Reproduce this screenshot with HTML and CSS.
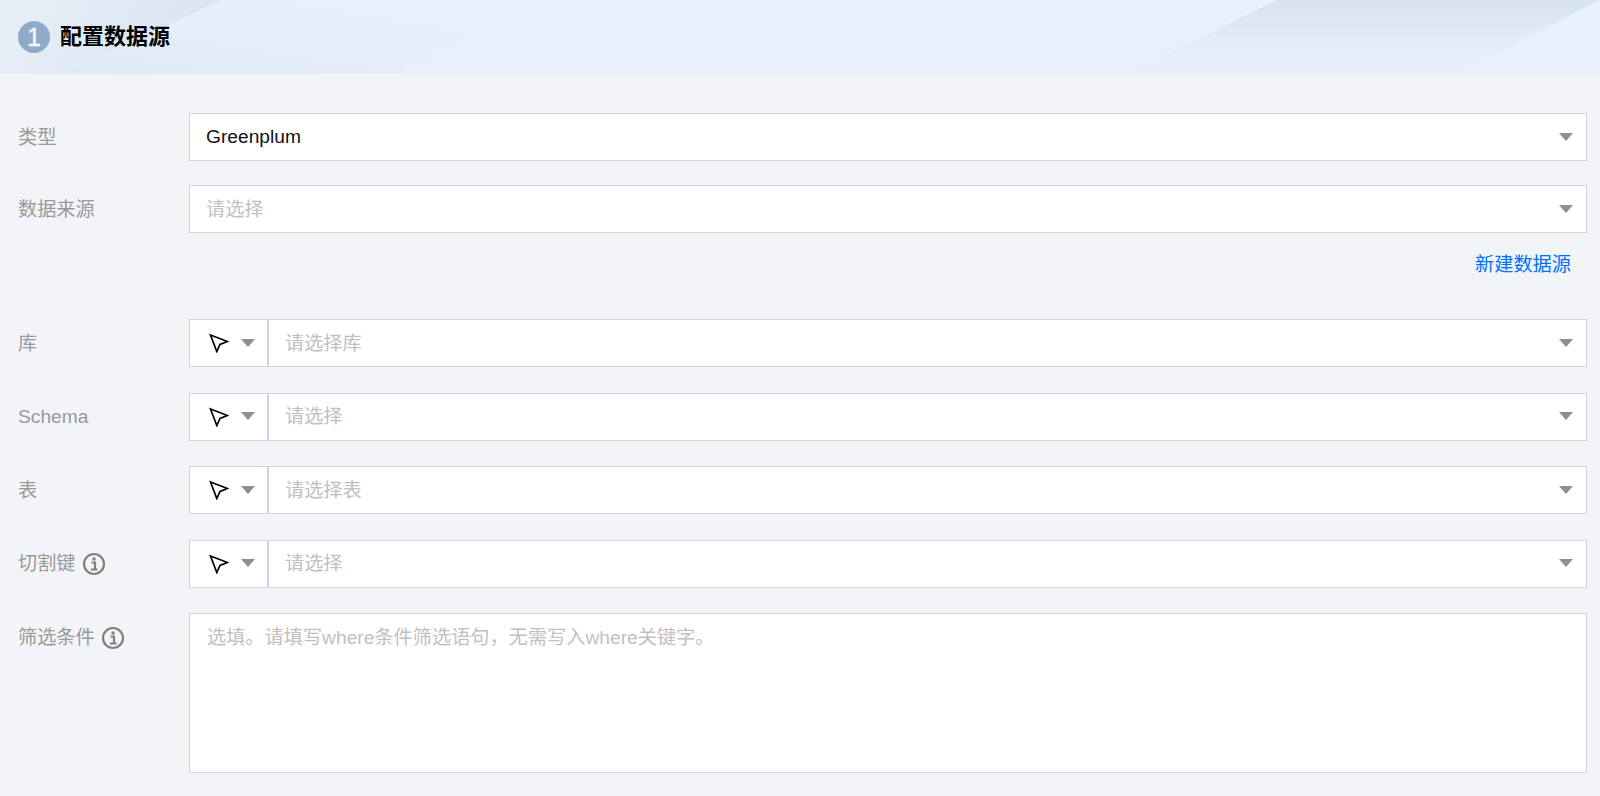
FILE: index.html
```html
<!DOCTYPE html>
<html lang="zh-CN">
<head>
    <meta charset="UTF-8">
    <meta name="viewport" content="width=device-width, initial-scale=1.0">
    <title>配置数据源</title>
    <link rel="stylesheet" href="styles.css">
</head>
<body>
    <div class="step-header">
        <svg class="step-bg" viewBox="0 0 1600 74" preserveAspectRatio="none" aria-hidden="true">
            <defs>
                <linearGradient id="bandLeft" x1="0" y1="0" x2="1" y2="0.2">
                    <stop offset="0" stop-color="#e9f0f8"/>
                    <stop offset="1" stop-color="#d8e4f1"/>
                </linearGradient>
                <linearGradient id="bandMid" x1="0" y1="1" x2="1" y2="0">
                    <stop offset="0" stop-color="#dfe9f5"/>
                    <stop offset="0.75" stop-color="#e8f1fb"/>
                </linearGradient>
                <linearGradient id="bandRight" x1="0" y1="0" x2="0" y2="1">
                    <stop offset="0" stop-color="#d6e3f0"/>
                    <stop offset="0.55" stop-color="#e3ebf6"/>
                    <stop offset="1" stop-color="#e8f1fb"/>
                </linearGradient>
            </defs>
            <polygon points="222,0 520,0 400,74 60,74" fill="url(#bandMid)"/>
            <polygon points="0,0 222,0 60,74 0,74" fill="url(#bandLeft)"/>
            <polygon points="1277,0 1600,0 1455,74 1127,74" fill="url(#bandRight)"/>
        </svg>
        <span class="step-num">1</span>
        <h2 class="step-title">配置数据源</h2>
    </div>

    <form class="form-body">
        <div class="form-row">
            <label class="form-label"><span class="cjk">类型</span></label>
            <div class="select-box">
                <span class="select-value">Greenplum</span>
                <i class="caret"></i>
            </div>
        </div>
        <div class="form-row">
            <label class="form-label"><span class="cjk">数据来源</span></label>
            <div class="select-box">
                <span class="cjk placeholder">请选择</span>
                <i class="caret"></i>
            </div>
        </div>
        <div class="form-extra">
            <a class="link" href="#">新建数据源</a>
        </div>

        <div class="form-row form-row-tight">
            <label class="form-label"><span class="cjk">库</span></label>
            <div class="group-select">
                <div class="mode-btn">
                    <svg class="arrow-icon" viewBox="0 0 20 20"><path d="M1.5 2 L18.5 8.5 L11 11.5 L7.8 18.5 Z"/></svg>
                    <i class="caret"></i>
                </div>
                <div class="select-box">
                    <span class="cjk placeholder">请选择库</span>
                    <i class="caret"></i>
                </div>
            </div>
        </div>
        <div class="form-row form-row-tight">
            <label class="form-label">Schema</label>
            <div class="group-select">
                <div class="mode-btn">
                    <svg class="arrow-icon" viewBox="0 0 20 20"><path d="M1.5 2 L18.5 8.5 L11 11.5 L7.8 18.5 Z"/></svg>
                    <i class="caret"></i>
                </div>
                <div class="select-box">
                    <span class="cjk placeholder">请选择</span>
                    <i class="caret"></i>
                </div>
            </div>
        </div>
        <div class="form-row form-row-tight">
            <label class="form-label"><span class="cjk">表</span></label>
            <div class="group-select">
                <div class="mode-btn">
                    <svg class="arrow-icon" viewBox="0 0 20 20"><path d="M1.5 2 L18.5 8.5 L11 11.5 L7.8 18.5 Z"/></svg>
                    <i class="caret"></i>
                </div>
                <div class="select-box">
                    <span class="cjk placeholder">请选择表</span>
                    <i class="caret"></i>
                </div>
            </div>
        </div>
        <div class="form-row form-row-tight">
            <label class="form-label"><span class="cjk">切割键</span>
                <svg class="info-icon" viewBox="0 0 24 24"><circle cx="12" cy="12" r="10"/><circle class="dot" cx="12" cy="7" r="1.7"/><path d="M9.5 10.5 H13 V17 M9 17.5 H15.5"/></svg>
            </label>
            <div class="group-select">
                <div class="mode-btn">
                    <svg class="arrow-icon" viewBox="0 0 20 20"><path d="M1.5 2 L18.5 8.5 L11 11.5 L7.8 18.5 Z"/></svg>
                    <i class="caret"></i>
                </div>
                <div class="select-box">
                    <span class="cjk placeholder">请选择</span>
                    <i class="caret"></i>
                </div>
            </div>
        </div>
        <div class="form-row form-row-top">
            <label class="form-label"><span class="cjk">筛选条件</span>
                <svg class="info-icon" viewBox="0 0 24 24"><circle cx="12" cy="12" r="10"/><circle class="dot" cx="12" cy="7" r="1.7"/><path d="M9.5 10.5 H13 V17 M9 17.5 H15.5"/></svg>
            </label>
            <div class="textarea-box placeholder">选填。请填写where条件筛选语句，无需写入where关键字。</div>
        </div>
    </form>
</body>
</html>
```

FILE: styles.css
```css
* {
    box-sizing: border-box;
}
body {
    margin: 0;
    background-color: #f2f4f8;
    font-family: "Liberation Sans", "Noto Sans CJK SC", sans-serif;
    font-size: 19.2px;
    overflow: hidden;
}
.step-header {
    position: relative;
    height: 74px;
    padding-left: 18px;
    display: flex;
    align-items: center;
    background-color: #e8f1fb;
}
.step-bg {
    position: absolute;
    left: 0;
    top: 0;
    width: 100%;
    height: 100%;
}
.step-num {
    position: relative;
    width: 32px;
    height: 32px;
    border-radius: 50%;
    background-color: #8fabc9;
    color: #f4f7fb;
    font-size: 25px;
    line-height: 32px;
    text-align: center;
    -webkit-text-stroke: 0.4px #f4f7fb;
}
.step-title {
    position: relative;
    margin: 0 0 0 10px;
    padding-bottom: 6px;
    font-size: 22px;
    font-weight: bold;
    color: #000;
}
.form-body {
    padding: 39px 13px 0 18px;
}
.form-row {
    display: flex;
    align-items: center;
    margin-bottom: 24px;
}
.form-row-tight {
    margin-bottom: 25.6px;
}
.form-row-top {
    align-items: flex-start;
    margin-bottom: 0;
}
.form-label {
    width: 171px;
    flex-shrink: 0;
    display: flex;
    align-items: center;
    gap: 6px;
    color: #999;
}
.form-row-top .form-label {
    padding-top: 9px;
}
/* noto cjk sits lower than the latin text, pull it up a bit */
.cjk {
    padding-bottom: 3px;
}
.select-box {
    flex: 1;
    height: 48px;
    padding: 0 17px 0 16px;
    display: flex;
    align-items: center;
    justify-content: space-between;
    background-color: white;
    border: 1px solid #cfd5de;
}
.select-value {
    color: #111;
}
.placeholder {
    color: #c0c0c0;
}
.caret {
    display: block;
    width: 0;
    height: 0;
    margin-top: -1px;
    margin-right: -4px;
    border-left: 7px solid transparent;
    border-right: 7px solid transparent;
    border-top: 8px solid #8f8f8f;
}
.form-extra {
    height: 70px;
    margin-top: -8px;
    padding-right: 16px;
    text-align: right;
}
.link {
    color: #006eff;
    text-decoration: none;
    line-height: 32px;
}
.group-select {
    flex: 1;
    display: flex;
}
.mode-btn {
    width: 80px;
    height: 48px;
    padding-left: 19px;
    display: flex;
    align-items: center;
    gap: 12px;
    background-color: white;
    border: 1px solid #cfd5de;
    border-right-width: 2px;
}
.mode-btn .caret {
    margin-right: 0;
}
.group-select .select-box {
    border-left: none;
}
.arrow-icon {
    width: 20px;
    height: 20px;
    fill: none;
    stroke: #000;
    stroke-width: 1.7;
}
.info-icon {
    width: 24px;
    height: 24px;
    fill: none;
    stroke: #808080;
    stroke-width: 2.2;
}
.info-icon .dot {
    fill: #808080;
    stroke: none;
}
.textarea-box {
    flex: 1;
    height: 160px;
    padding: 8px 17px;
    background-color: white;
    border: 1px solid #cfd5de;
}
```
